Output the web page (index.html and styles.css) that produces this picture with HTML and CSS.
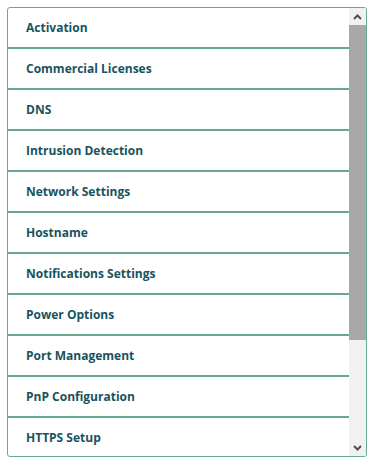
FILE: index.html
```html
<!DOCTYPE html>
<html lang="en">
<head>
    <meta charset="UTF-8">
    <meta name="viewport" content="width=device-width, initial-scale=1.0">
    <title>Settings</title>
    <link rel="stylesheet" href="styles.css">
</head>
<body>
    <div class="menu">
        <ul class="menu-list">
            <li class="menu-item">Activation</li>
            <li class="menu-item">Commercial Licenses</li>
            <li class="menu-item">DNS</li>
            <li class="menu-item">Intrusion Detection</li>
            <li class="menu-item">Network Settings</li>
            <li class="menu-item">Hostname</li>
            <li class="menu-item">Notifications Settings</li>
            <li class="menu-item">Power Options</li>
            <li class="menu-item">Port Management</li>
            <li class="menu-item">PnP Configuration</li>
            <li class="menu-item">HTTPS Setup</li>
        </ul>

        <!-- Scrollbar -->
        <div class="scrollbar">
            <div class="scroll-btn">
                <svg width="9" height="6" viewBox="0 0 9 6"><path d="M1 5 L4.5 1.5 L8 5" fill="none" stroke="#505050" stroke-width="2"/></svg>
            </div>
            <div class="scroll-track">
                <div class="scroll-thumb"></div>
            </div>
            <div class="scroll-btn">
                <svg width="9" height="6" viewBox="0 0 9 6"><path d="M1 1 L4.5 4.5 L8 1" fill="none" stroke="#505050" stroke-width="2"/></svg>
            </div>
        </div>
    </div>
</body>
</html>
```

FILE: styles.css
```css
* {
    margin: 0;
    padding: 0;
    box-sizing: border-box;
}
body {
    font-family: 'Open Sans', 'Liberation Sans', sans-serif;
    background: #fff;
    padding: 7px 9px 11px 7px;
}
.menu {
    width: 360px;
    height: 450px;
    border: 1px solid #6aaa8a;
    border-radius: 3px;
    overflow: hidden;
    display: flex;
}
.menu-list {
    list-style: none;
    flex: 1;
    overflow: hidden;
}
.menu-item {
    height: 41px;
    padding-left: 18px;
    display: flex;
    align-items: center;
    border-bottom: 2px solid #6aaa8a;
    font-size: 12px;
    font-weight: bold;
    color: #17535e;
}
/* Scrollbar */
.scrollbar {
    width: 17px;
    background: #f1f1f1;
    display: flex;
    flex-direction: column;
}
.scroll-btn {
    height: 17px;
    display: flex;
    align-items: center;
    justify-content: center;
}
.scroll-track {
    flex: 1;
}
.scroll-thumb {
    height: 315px;
    background: #a8a8a8;
}
```
